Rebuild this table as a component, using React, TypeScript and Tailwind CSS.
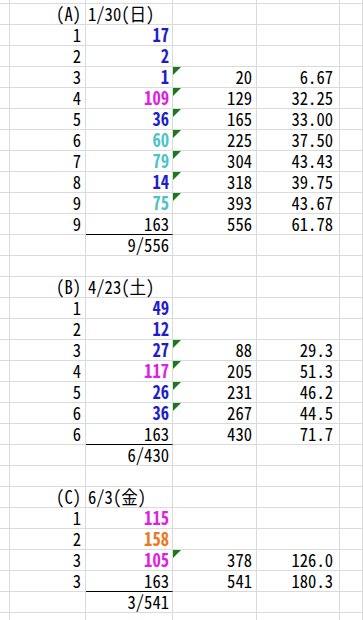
import type { ReactNode } from "react";

type Row = {
  a?: string;
  b?: string;
  color?: string;
  label?: boolean;
  tri?: boolean;
  c?: string;
  d?: string;
  total?: boolean;
};

const BLUE = "text-[#1e1ec8] font-bold";
const MAG = "text-[#e020e0] font-bold";
const TEAL = "text-[#4cc4c8] font-bold";
const ORANGE = "text-[#ee7722] font-bold";

const rows: Row[] = [
  { a: "(A)", b: "1/30(日)", label: true },
  { a: "1", b: "17", color: BLUE },
  { a: "2", b: "2", color: BLUE },
  { a: "3", b: "1", color: BLUE, tri: true, c: "20", d: "6.67" },
  { a: "4", b: "109", color: MAG, tri: true, c: "129", d: "32.25" },
  { a: "5", b: "36", color: BLUE, tri: true, c: "165", d: "33.00" },
  { a: "6", b: "60", color: TEAL, tri: true, c: "225", d: "37.50" },
  { a: "7", b: "79", color: TEAL, tri: true, c: "304", d: "43.43" },
  { a: "8", b: "14", color: BLUE, tri: true, c: "318", d: "39.75" },
  { a: "9", b: "75", color: TEAL, tri: true, c: "393", d: "43.67" },
  { a: "9", b: "163", total: true, c: "556", d: "61.78" },
  { b: "9/556" },
  {},
  { a: "(B)", b: "4/23(土)", label: true },
  { a: "1", b: "49", color: BLUE },
  { a: "2", b: "12", color: BLUE },
  { a: "3", b: "27", color: BLUE, tri: true, c: "88", d: "29.3" },
  { a: "4", b: "117", color: MAG, tri: true, c: "205", d: "51.3" },
  { a: "5", b: "26", color: BLUE, tri: true, c: "231", d: "46.2" },
  { a: "6", b: "36", color: BLUE, tri: true, c: "267", d: "44.5" },
  { a: "6", b: "163", total: true, c: "430", d: "71.7" },
  { b: "6/430" },
  {},
  { a: "(C)", b: "6/3(金)", label: true },
  { a: "1", b: "115", color: MAG },
  { a: "2", b: "158", color: ORANGE },
  { a: "3", b: "105", color: MAG, tri: true, c: "378", d: "126.0" },
  { a: "3", b: "163", total: true, c: "541", d: "180.3" },
  { b: "3/541" },
  {},
];

function Cell({ className, children }: { className: string; children?: ReactNode }) {
  return (
    <div className={`relative flex h-[21px] shrink-0 items-end border-r border-b border-[#dadada] pb-[1px] leading-none ${className}`}>
      {children && <span className="inline-block origin-bottom scale-y-[1.1]">{children}</span>}
    </div>
  );
}

export default function App() {
  return (
    <div
      className="h-[620px] w-[363px] overflow-hidden bg-white text-[16.6px] text-black [font-feature-settings:'hwid']"
      style={{ fontFamily: '"Noto Sans CJK JP", "Noto Sans", sans-serif' }}
    >
      <div className="flex">
        <Cell className="!h-[4px] w-[10px]" />
        <Cell className="!h-[4px] w-[76px]" />
        <Cell className="!h-[4px] w-[87px]" />
        <Cell className="!h-[4px] w-[84px]" />
        <Cell className="!h-[4px] w-[83px]" />
        <Cell className="!h-[4px] flex-1" />
      </div>
      {rows.map((r, i) => (
        <div key={i} className="flex">
          <Cell className="w-[10px]" />
          <Cell className="w-[76px] justify-end pr-[4px]">{r.a}</Cell>
          <Cell
            className={`w-[87px] ${r.label ? "justify-start pl-[2px]" : "justify-end pr-[3px]"} ${
              r.total ? "border-b-black" : ""
            } ${r.color ?? ""}`}
          >
            {r.b}
          </Cell>
          <div className="relative flex h-[21px] w-[84px] shrink-0 items-end justify-end border-r border-b border-[#dadada] pr-[4px] pb-[1px] leading-none">
            {r.tri && (
              <svg className="absolute top-0 left-0" width="8" height="8" viewBox="0 0 8 8">
                <polygon points="0,0 8,0 0,8" fill="#1a7a1a" />
              </svg>
            )}
            {r.c && <span className="inline-block origin-bottom scale-y-[1.1]">{r.c}</span>}
          </div>
          <Cell className="w-[83px] justify-end pr-[6px]">{r.d}</Cell>
          <Cell className="flex-1" />
        </div>
      ))}
    </div>
  );
}
